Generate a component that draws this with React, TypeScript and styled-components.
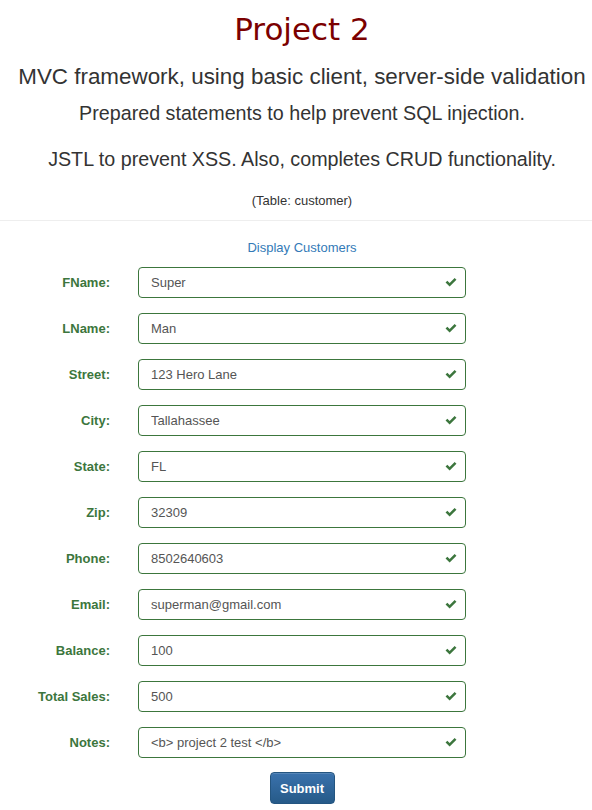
import styled, { createGlobalStyle } from "styled-components";

const GlobalStyle = createGlobalStyle`
  body {
    margin: 0;
    background: #fff;
    font-family: "Liberation Sans", Arial, sans-serif;
    color: #333;
  }
`;

const Header = styled.header`
  padding-left: 12px;
  text-align: center;
`;

const Title = styled.h1`
  margin: 0;
  padding-top: 9px;
  font-family: "DejaVu Sans", Verdana, sans-serif;
  font-weight: normal;
  font-size: 31px;
  line-height: 40px;
  color: #7b0000;
`;

const Subtitle = styled.h3`
  margin: 16px 0 0;
  font-weight: normal;
  font-size: 22.4px;
  line-height: 24px;
`;

const Line = styled.h4<{ $gap: number }>`
  margin: ${(p) => p.$gap}px 0 0;
  font-weight: normal;
  font-size: 19.7px;
  line-height: 24px;
`;

const TableNote = styled.p`
  margin: 22px 0 0;
  font-size: 13px;
  line-height: 16px;
`;

const Rule = styled.hr`
  margin: 11px 0 0;
  border: 0;
  border-top: 1px solid #eee;
`;

const FormSection = styled.section`
  padding-left: 12px;
  padding-bottom: 8px;
`;

const DisplayLink = styled.a`
  display: block;
  text-align: center;
  margin-top: 19px;
  font-size: 13px;
  line-height: 16px;
  color: #337ab7;
  text-decoration: none;
`;

const Form = styled.form`
  display: grid;
  grid-template-columns: 98px 328px;
  column-gap: 28px;
  row-gap: 15px;
  margin-top: 11px;
  align-items: center;
`;

const Label = styled.label`
  text-align: right;
  font-weight: bold;
  font-size: 13px;
  color: #3c763d;
  margin-top: -1px;
`;

const Field = styled.div`
  position: relative;
`;

const Input = styled.input`
  box-sizing: border-box;
  display: block;
  width: 100%;
  height: 31px;
  padding: 0 30px 0 12px;
  border: 1px solid #3c763d;
  border-radius: 4px;
  font-family: "Liberation Sans", Arial, sans-serif;
  font-size: 13px;
  color: #555;
  background: #fff;
  outline: none;
`;

const Check = styled.svg`
  position: absolute;
  right: 9px;
  top: 10px;
  width: 12px;
  height: 10px;
`;

const Actions = styled.div`
  grid-column: 2;
  display: flex;
  justify-content: center;
  margin-top: -1px;
`;

const SubmitButton = styled.button`
  width: 65px;
  height: 32px;
  border: 1px solid #245580;
  border-radius: 4px;
  background: linear-gradient(to bottom, #3a72ad 0%, #265a88 100%);
  color: #fff;
  font-family: "Liberation Sans", Arial, sans-serif;
  font-weight: bold;
  font-size: 13px;
  box-shadow: inset 0 1px 0 rgba(255, 255, 255, 0.15);
`;

const fields = [
  ["FName", "Super"],
  ["LName", "Man"],
  ["Street", "123 Hero Lane"],
  ["City", "Tallahassee"],
  ["State", "FL"],
  ["Zip", "32309"],
  ["Phone", "8502640603"],
  ["Email", "superman@gmail.com"],
  ["Balance", "100"],
  ["Total Sales", "500"],
  ["Notes", "<b> project 2 test </b>"],
];

function CheckIcon() {
  return (
    <Check viewBox="0 0 13 11">
      <path d="M0.5 6 L2.5 4 L5 6.5 L10.5 1 L12.5 3 L5 10.5 Z" fill="#3c763d" />
    </Check>
  );
}

export default function App() {
  return (
    <>
      <GlobalStyle />
      <Header>
        <Title>Project 2</Title>
        <Subtitle>MVC framework, using basic client, server-side validation</Subtitle>
        <Line $gap={12}>Prepared statements to help prevent SQL injection.</Line>
        <Line $gap={22}>JSTL to prevent XSS. Also, completes CRUD functionality.</Line>
        <TableNote>(Table: customer)</TableNote>
      </Header>
      <Rule />
      <FormSection>
        <DisplayLink href="#">Display Customers</DisplayLink>
        <Form onSubmit={(e) => e.preventDefault()}>
          {fields.map(([label, value]) => (
            <>
              <Label key={label + "-l"}>{label}:</Label>
              <Field key={label + "-f"}>
                <Input defaultValue={value} />
                <CheckIcon />
              </Field>
            </>
          ))}
          <Actions>
            <SubmitButton type="submit">Submit</SubmitButton>
          </Actions>
        </Form>
      </FormSection>
    </>
  );
}
